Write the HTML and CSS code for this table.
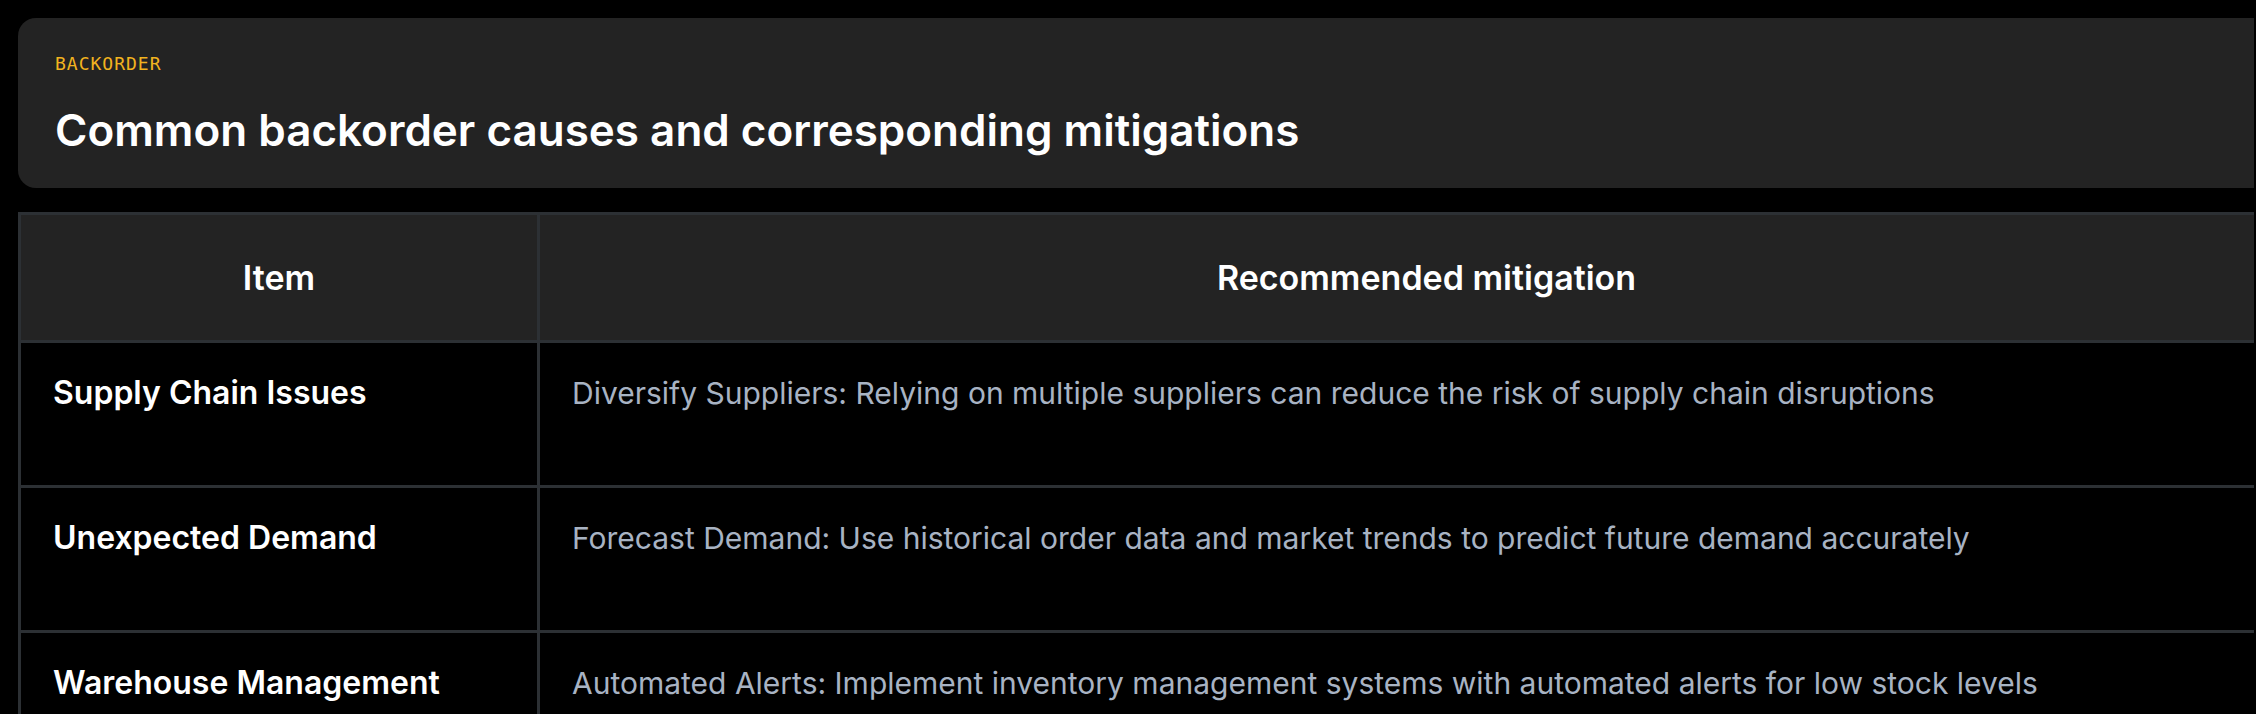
FILE: index.html
```html
<!DOCTYPE html>
<html lang="en">
<head>
    <meta charset="UTF-8">
    <title>Backorder causes</title>
    <link rel="stylesheet" href="styles.css">
</head>
<body>
<div class="page">
    <div class="head">
        <p class="label">BACKORDER</p>
        <h1 class="title">Common backorder causes and corresponding mitigations</h1>
    </div>
    <table class="grid">
        <thead>
        <tr>
            <th class="col-item">Item</th>
            <th>Recommended mitigation</th>
        </tr>
        </thead>
        <tbody>
        <tr>
            <td class="item">Supply Chain Issues</td>
            <td class="desc">Diversify Suppliers: Relying on multiple suppliers can reduce the risk of supply chain disruptions</td>
        </tr>
        <tr>
            <td class="item">Unexpected Demand</td>
            <td class="desc">Forecast Demand: Use historical order data and market trends to predict future demand accurately</td>
        </tr>
        <tr>
            <td class="item">Warehouse Management Shortcomings</td>
            <td class="desc">Automated Alerts: Implement inventory management systems with automated alerts for low stock levels</td>
        </tr>
        </tbody>
    </table>
</div>
</body>
</html>
```

FILE: styles.css
```css
*{
    margin: 0;
    padding: 0;
    box-sizing: border-box;
}
html,body{
    background: #000;
    overflow: hidden;
}
body{
    font-family: Inter, "Noto Sans", sans-serif;
    color: #fff;
}
.page{
    width: 2254px;
    overflow: hidden;
    padding: 18px 0 0 18px;
}
.head{
    width: 2298px;
    height: 170px;
    background: #232323;
    border-radius: 18px;
    padding: 34px 37px 0;
}
.label{
    font-family: "DejaVu Sans Mono", "Liberation Mono", monospace;
    font-size: 18px;
    letter-spacing: 1px;
    line-height: 24px;
    color: #f2b31f;
}
.title{
    margin-top: 27px;
    font-size: 44px;
    font-weight: 600;
    line-height: 54px;
}
.grid{
    width: 2298px;
    margin-top: 24px;
    border-collapse: collapse;
    table-layout: fixed;
}
.grid th,
.grid td{
    border: 3px solid #2c3034;
}
.grid th{
    height: 128px;
    background: #232323;
    font-size: 34px;
    font-weight: 600;
    text-align: center;
}
.col-item{
    width: 519px;
}
.grid td{
    height: 145px;
    padding: 26px 32px;
    vertical-align: top;
    line-height: 48px;
}
.item{
    font-size: 32px;
    font-weight: 600;
}
.desc{
    font-size: 30px;
    color: #a8b3c3;
}
```
